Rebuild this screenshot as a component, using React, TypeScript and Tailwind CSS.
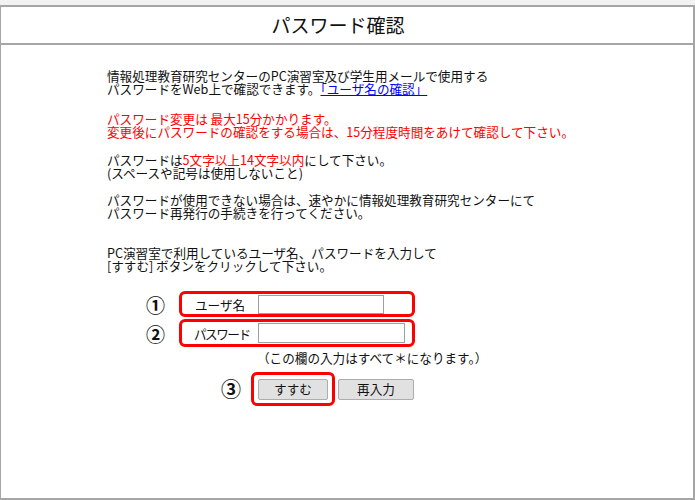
const font = { fontFamily: '"Noto Sans CJK JP", "Noto Sans", sans-serif' };

export default function App() {
  return (
    <div className="w-[695px] h-[500px] bg-white overflow-hidden text-[#111]" style={font}>
      <div className="h-[5px] bg-[#f2f2f2]" />
      <div className="h-[495px] border-t-2 border-l border-r-2 border-b-2 border-[#a6a6a6]">
        <header className="h-[38px] border-b-2 border-[#a6a6a6] flex items-center justify-center pr-[18px] text-[19px]">
          パスワード確認
        </header>

        <main className="pt-[24px] text-[12.6px] leading-[13px]">
          <div className="pl-[106px]">
            <p>情報処理教育研究センターのPC演習室及び学生用メールで使用する</p>
            <p>
              パスワードをWeb上で確認できます。
              <a href="#" className="text-[#0000ff] underline">「ユーザ名の確認」</a>
            </p>

            <div className="mt-[17px] text-[#ff0000]">
              <p>パスワード変更は 最大15分かかります。</p>
              <p>変更後にパスワードの確認をする場合は、15分程度時間をあけて確認して下さい。</p>
            </div>

            <div className="mt-[15px]">
              <p>
                パスワードは<span className="text-[#ff0000]">5文字以上14文字以内</span>にして下さい。
              </p>
              <p>(スペースや記号は使用しないこと)</p>
            </div>

            <div className="mt-[14px]">
              <p>パスワードが使用できない場合は、速やかに情報処理教育研究センターにて</p>
              <p>パスワード再発行の手続きを行ってください。</p>
            </div>

            <div className="mt-[27px]">
              <p>PC演習室で利用しているユーザ名、パスワードを入力して</p>
              <p>[すすむ] ボタンをクリックして下さい。</p>
            </div>
          </div>

          <form className="mt-[19px]" onSubmit={(e) => e.preventDefault()}>
            <div className="flex items-center">
              <span className="ml-[145px] w-[20px] text-[19px] font-semibold leading-none">①</span>
              <div className="ml-[13px] w-[236px] h-[26px] border-[3px] border-[#ff0000] rounded-[6px] flex items-center pl-[13px]">
                <label className="w-[63px]">ユーザ名</label>
                <input className="w-[126px] h-[19px] border border-[#a0a0a0] bg-white outline-none" />
              </div>
            </div>

            <div className="flex items-center mt-[2px]">
              <span className="ml-[145px] w-[20px] text-[19px] font-semibold leading-none">②</span>
              <div className="ml-[13px] w-[236px] h-[28px] border-[3px] border-[#ff0000] rounded-[6px] flex items-center pl-[12px]">
                <label className="w-[64px] tracking-[-1.5px]">パスワード</label>
                <input type="password" className="w-[147px] h-[20px] border border-[#a0a0a0] bg-white outline-none" />
              </div>
            </div>

            <p className="ml-[256px] mt-[4px]">（この欄の入力はすべて＊になります。）</p>

            <div className="flex items-center mt-[8px]">
              <span className="ml-[220px] w-[24px] text-[20px] font-semibold leading-none">③</span>
              <div className="ml-[6px] border-[3px] border-[#ff0000] rounded-[6px] p-[4px] pb-[3px]">
                <button type="submit" className="w-[70px] h-[21px] bg-[#e1e1e1] border border-[#adadad] rounded-[2px] text-[12.6px] leading-none">
                  すすむ
                </button>
              </div>
              <button type="reset" className="ml-[3px] w-[76px] h-[21px] bg-[#e1e1e1] border border-[#adadad] rounded-[2px] text-[12.6px] leading-none">
                再入力
              </button>
            </div>
          </form>
        </main>
      </div>
    </div>
  );
}
